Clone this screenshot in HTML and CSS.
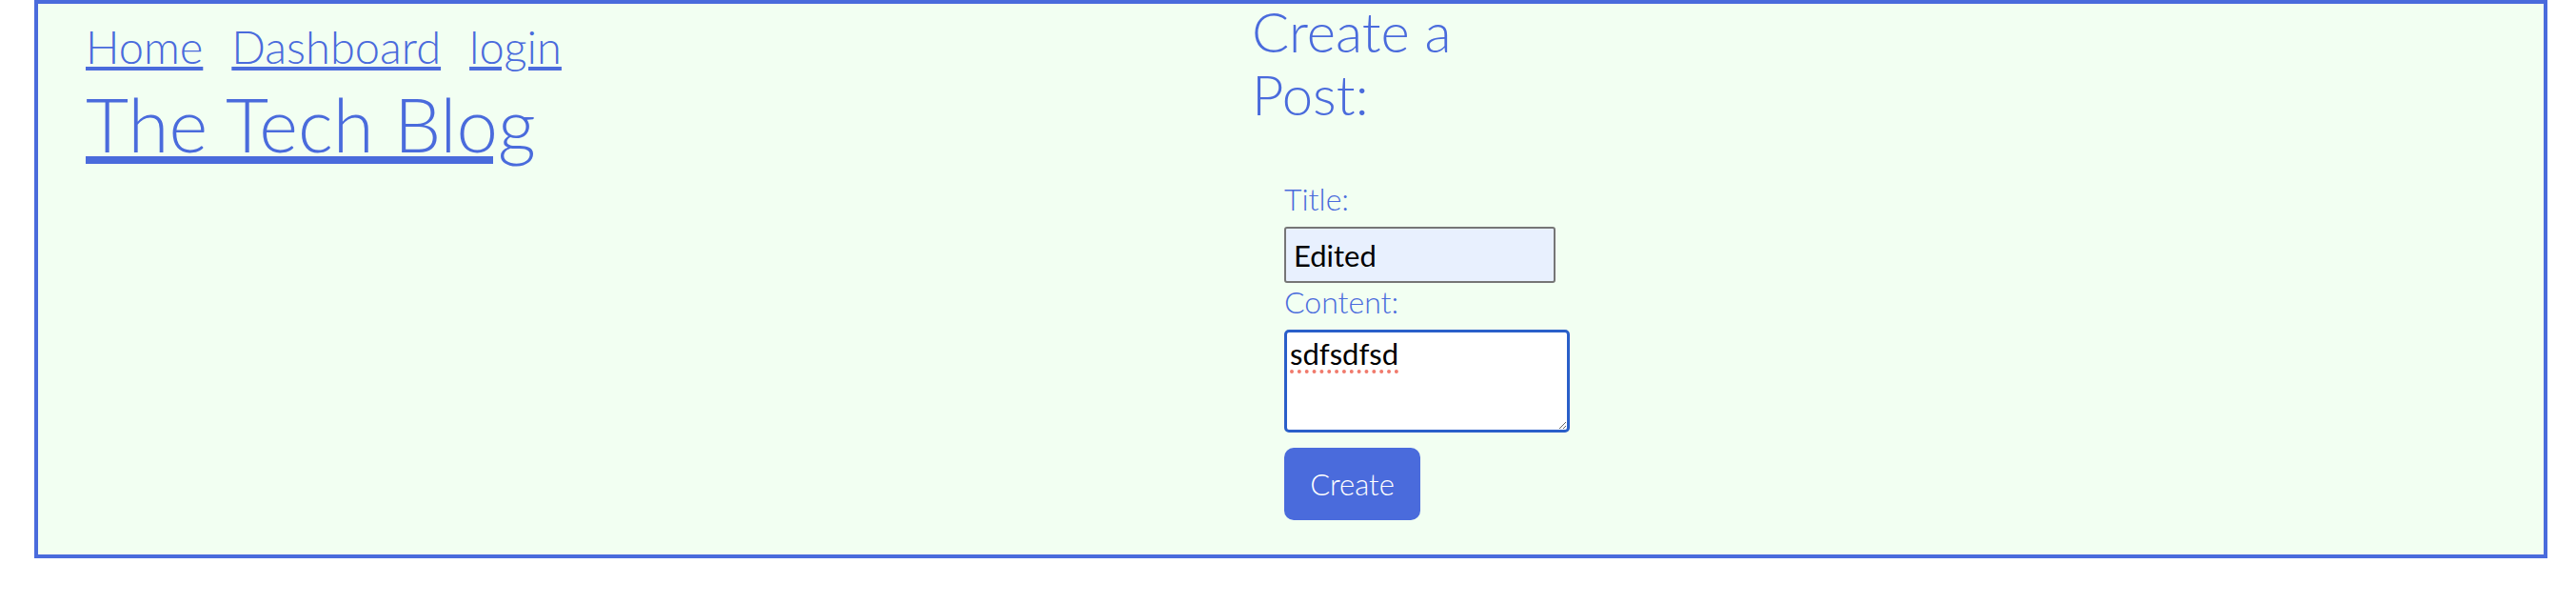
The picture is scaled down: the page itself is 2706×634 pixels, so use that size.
FILE: index.html
```html
<!DOCTYPE html>
<html lang="en">
<head>
<meta charset="utf-8">
<title>The Tech Blog</title>
<link rel="stylesheet" href="styles.css">
</head>
<body>
<div class="page">
  <header class="site-header">
    <nav class="nav">
      <a href="#" class="nav-link">Home</a>
      <a href="#" class="nav-link">Dashboard</a>
      <a href="#" class="nav-link">login</a>
    </nav>
    <h1 class="site-title"><a href="#" class="title-link">The Tech Blog</a></h1>
  </header>
  <section class="create">
    <h2 class="create-heading">Create a Post:</h2>
    <form class="post-form">
      <label class="field-label" for="title">Title:</label>
      <input class="title-input" id="title" type="text" value="Edited">
      <label class="field-label" for="content">Content:</label>
      <textarea class="content-input" id="content">sdfsdfsd</textarea>
      <button class="create-btn" type="button">Create</button>
    </form>
  </section>
</div>
</body>
</html>
```

FILE: styles.css
```css
html, body {
  margin: 0;
  padding: 0;
  background: #ffffff;
}

body {
  font-family: "Lato", "Open Sans", sans-serif;
  font-weight: 300;
  color: #4a6bdc;
}

.page {
  margin-left: 36px;
  width: 2640px;
  height: 586px;
  box-sizing: border-box;
  border: 4px solid #4a6bdc;
  background: #f2fff2;
  display: flex;
}

.site-header {
  width: 1275px;
  padding-left: 50px;
  padding-top: 16px;
  box-sizing: border-box;
}

.nav {
  display: flex;
  gap: 30px;
  font-size: 47px;
  line-height: 59px;
}

.nav-link,
.title-link {
  color: #4a6bdc;
  text-decoration: underline;
}

.nav-link {
  text-decoration-thickness: 4px;
  text-underline-offset: 3px;
}

.site-title {
  margin: 12px 0 0;
  font-size: 78px;
  font-weight: 300;
  line-height: 78px;
}

.title-link {
  text-decoration-thickness: 8px;
  text-underline-offset: 4px;
}

.create {
  width: 400px;
}

.create-heading {
  width: 240px;
  margin: -4px 0 0;
  font-size: 58px;
  font-weight: 300;
  line-height: 66px;
}

.post-form {
  margin: 57px 0 0 34px;
  display: flex;
  flex-direction: column;
  align-items: flex-start;
}

.field-label {
  display: block;
  font-size: 32px;
  line-height: 40px;
  margin-bottom: 9px;
}

.title-input {
  width: 285px;
  height: 59px;
  box-sizing: border-box;
  margin: 0;
  padding: 0 8px;
  border: 2px solid #767676;
  border-radius: 3px;
  background: #e8f0fe;
  font-family: "Lato", "Open Sans", sans-serif;
  font-size: 31px;
  color: #000000;
}

.content-input {
  width: 300px;
  height: 108px;
  box-sizing: border-box;
  margin: 0 0 16px;
  padding: 4px 3px;
  border: 3px solid #2a5fc9;
  border-radius: 5px;
  background: #ffffff;
  font-family: "Lato", "Open Sans", sans-serif;
  font-size: 31px;
  line-height: 36px;
  color: #000000;
  outline: none;
  text-decoration: underline dotted #f07a6c;
  text-decoration-thickness: 4px;
  text-underline-offset: 5px;
}

.create-btn {
  width: 143px;
  height: 76px;
  border: none;
  border-radius: 10px;
  background: #4a6bdc;
  color: #ffffff;
  font-family: "Lato", "Open Sans", sans-serif;
  font-weight: 300;
  font-size: 31px;
  padding: 0;
}
```
